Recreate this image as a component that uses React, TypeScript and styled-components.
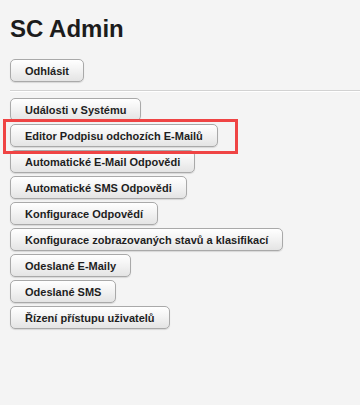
import React from 'react';
import styled, { createGlobalStyle } from 'styled-components';

const GlobalStyle = createGlobalStyle`
  html, body {
    margin: 0;
    padding: 0;
    background: #f4f4f4;
  }
  body {
    font-family: "Liberation Sans", Arial, Helvetica, sans-serif;
    color: #222;
  }
`;

const Page = styled.div`
  padding: 15px 0 20px 10px;
  min-height: 405px;
  box-sizing: border-box;
  overflow: hidden;
`;

const Title = styled.h1`
  margin: 0;
  font-size: 24px;
  line-height: 28px;
  font-weight: 700;
  color: #1c1c1c;
`;

const Button = styled.button`
  display: inline-flex;
  align-items: center;
  height: 23px;
  padding: 0 14px;
  font-family: "Liberation Sans", Arial, Helvetica, sans-serif;
  font-size: 11px;
  font-weight: 700;
  color: #1e1e1e;
  white-space: nowrap;
  border: 1px solid #a9a9a9;
  border-radius: 5px;
  background: linear-gradient(#ffffff, #f2f2f2 50%, #e4e4e4);
  box-shadow: 0 1px 1px rgba(0, 0, 0, 0.12);
  cursor: pointer;
`;

const LogoutRow = styled.div`
  margin-top: 16px;
  display: flex;
`;

const Divider = styled.hr`
  margin: 8px 0 6px;
  border: none;
  border-top: 1px solid #d2d2d2;
  border-bottom: 1px solid #ffffff;
  height: 0;
`;

const Menu = styled.div`
  display: flex;
  flex-direction: column;
  align-items: flex-start;
  gap: 3px;
`;

const Highlight = styled.span`
  position: relative;
  display: inline-flex;

  &::after {
    content: '';
    position: absolute;
    top: -5px;
    bottom: -7px;
    left: -7px;
    right: -20px;
    border: 3px solid #ef4444;
    pointer-events: none;
  }
`;

const items = [
  'Události v Systému',
  'Editor Podpisu odchozích E-Mailů',
  'Automatické E-Mail Odpovědi',
  'Automatické SMS Odpovědi',
  'Konfigurace Odpovědí',
  'Konfigurace zobrazovaných stavů a klasifikací',
  'Odeslané E-Maily',
  'Odeslané SMS',
  'Řízení přístupu uživatelů',
];

const App: React.FC = () => {
  return (
    <>
      <GlobalStyle />
      <Page>
        <Title>SC Admin</Title>
        <LogoutRow>
          <Button>Odhlásit</Button>
        </LogoutRow>
        <Divider />
        <Menu>
          {items.map((label, i) =>
            i === 1 ? (
              <Highlight key={label}>
                <Button>{label}</Button>
              </Highlight>
            ) : (
              <Button key={label}>{label}</Button>
            )
          )}
        </Menu>
      </Page>
    </>
  );
};

export default App;
